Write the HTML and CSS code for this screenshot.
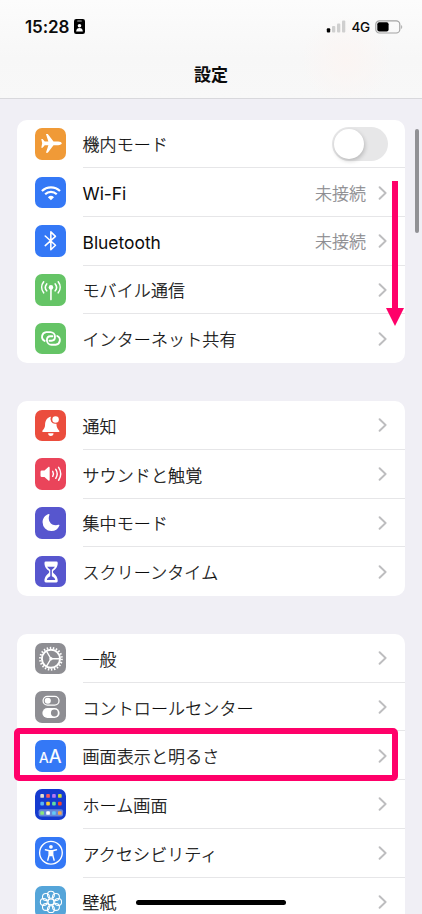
FILE: index.html
```html
<!DOCTYPE html>
<html lang="ja">
<head>
<meta charset="utf-8">
<title>設定</title>
<link rel="stylesheet" href="styles.css">
</head>
<body>
<svg class="defs" width="0" height="0"><defs>
<symbol id="chev" viewBox="0 0 10 14"><path d="M1.6 1.2 7.6 7l-6 5.8" fill="none" stroke="#bdbdbf" stroke-width="1.9" stroke-linecap="round" stroke-linejoin="round"/></symbol>
</defs></svg>
<div class="phone">
<header class="header">
  <div class="status">
    <div class="clock"><span>15:28</span>
      <svg width="11" height="15" viewBox="0 0 11 15"><rect width="11" height="15" rx="2.2"/><rect x="3.2" y="1.4" width="4.6" height="1.1" rx=".5" fill="#bbb"/><circle cx="5.5" cy="6.8" r="1.8" fill="#fff"/><path d="M2.2 12.4c0-2.2 1.4-3.4 3.3-3.4s3.3 1.2 3.3 3.4z" fill="#fff"/></svg>
    </div>
    <div class="signals">
      <svg width="20" height="13" viewBox="0 0 20 13"><rect x=".8" y="8.2" width="3.4" height="4.3" rx="1"/><g fill="#cfcfcf"><rect x="6" y="6" width="3.3" height="6.5" rx="1"/><rect x="11" y="3.4" width="3.3" height="9.1" rx="1"/><rect x="16" y=".6" width="3.3" height="11.9" rx="1"/></g></svg>
      <span class="net">4G</span>
      <svg width="28" height="14" viewBox="0 0 28 14"><rect x=".8" y=".8" width="24" height="12.2" rx="3.6" fill="none" stroke="#a4a4a4" stroke-width="1.2"/><rect x="2.3" y="2.3" width="11.3" height="9.2" rx="2"/><path d="M26.3 5c1.2.5 1.2 3.4 0 3.9z" fill="#999"/></svg>
    </div>
  </div>
  <h1 class="title">設定</h1>
</header>

<main class="groups">
<section class="group">
  <div class="row">
    <svg class="icon orange" viewBox="0 0 32 32"><path fill="#fff" d="M27.2 15.6c0-1-1.6-1.9-3.7-1.9h-4.7L13 6.2h-1.9l2.5 7.5H9.9l-2.2-2.6H6.4l.9 4.5-.9 4.5h1.3l2.2-2.6h3.7l-2.5 7.6H13l5.8-7.6h4.7c2.1 0 3.7-.9 3.7-1.9z"/></svg>
    <div class="cell"><span class="label">機内モード</span><span class="toggle"></span></div>
  </div>
  <div class="row">
    <svg class="icon blue" viewBox="0 0 32 32"><g fill="none" stroke="#fff" stroke-width="2.2"><path d="M7 14.2a13.2 13.2 0 0 1 18.4 0"/><path d="M10.3 17.6a8.4 8.4 0 0 1 11.8 0"/></g><path fill="#fff" d="M16.2 23.7l-3.1-3.2a4.6 4.6 0 0 1 6.2 0z"/></svg>
    <div class="cell"><span class="label latin">Wi-Fi</span><span class="value">未接続</span><svg class="chev"><use href="#chev"/></svg></div>
  </div>
  <div class="row">
    <svg class="icon blue" viewBox="0 0 32 32"><path d="M10.4 11.2l10.4 9.4-4.7 4.5V7l4.7 4.5-10.4 9.4" fill="none" stroke="#fff" stroke-width="1.6" stroke-linejoin="round" stroke-linecap="round"/></svg>
    <div class="cell"><span class="label latin">Bluetooth</span><span class="value">未接続</span><svg class="chev"><use href="#chev"/></svg></div>
  </div>
  <div class="row">
    <svg class="icon green" viewBox="0 0 32 32"><g fill="none" stroke="#fff" stroke-width="1.6" stroke-linecap="round"><path d="M16.2 14v12M11.900 10.100a5.500 5.500 0 0 0 0 7M20.500 10.100a5.500 5.500 0 0 1 0 7M8.800 7.900a9 9 0 0 0 0 11.200M23.600 7.900a9 9 0 0 1 0 11.200"/></g><circle cx="16.200" cy="13.600" r="2.300" fill="#fff"/></svg>
    <div class="cell"><span class="label">モバイル通信</span><svg class="chev"><use href="#chev"/></svg></div>
  </div>
  <div class="row">
    <svg class="icon green" viewBox="0 0 32 32"><g fill="none" stroke="#fff" stroke-width="1.900" stroke-linecap="round"><path d="M9.800 18.200a4.700 4.700 0 0 1 1.600-8.900h4.200a4.700 4.700 0 0 1 4.700 4.700c0 2.300-1.500 4-3.600 4h-2"/><path d="M9.800 18.200a4.700 4.700 0 0 1 1.600-8.900h4.200a4.700 4.700 0 0 1 4.700 4.700c0 2.300-1.500 4-3.600 4h-2" transform="rotate(180 16.200 15.700)"/></g></svg>
    <div class="cell"><span class="label">インターネット共有</span><svg class="chev"><use href="#chev"/></svg></div>
  </div>
</section>

<section class="group">
  <div class="row">
    <svg class="icon red" viewBox="0 0 32 32"><path fill="#fff" d="M7.300 21.700c0-1.100 2.800-2.500 2.900-6.200.1-4.700 2-8 6-8.600a4.800 4.800 0 0 0 4.800 7c1.100 0 .8.200.9 1.600.2 3.700 3 5.100 3 6.200 0 .4-.4.600-.9.600H8.200c-.5 0-.9-.2-.9-.6zM13.400 23.700h5.400a2.700 2.700 0 0 1-5.400 0z"/><circle cx="20.900" cy="9.600" r="3.300" fill="#fff"/></svg>
    <div class="cell"><span class="label">通知</span><svg class="chev"><use href="#chev"/></svg></div>
  </div>
  <div class="row">
    <svg class="icon pink" viewBox="0 0 32 32"><path fill="#fff" d="M5.600 14q0-1.300 1.300-1.300h2.700l4-3.500c.6-.5 1.300-.2 1.300.6v12.500c0 .8-.7 1.100-1.300.6l-4-3.600H6.900q-1.300 0-1.300-1.300z"/><g fill="none" stroke="#fff" stroke-width="1.500" stroke-linecap="round"><path d="M18 13.500a5 5 0 0 1 0 5.100M21.100 11.500a8.500 8.500 0 0 1 0 9.100M24 9.500a12 12 0 0 1 0 13.100"/></g></svg>
    <div class="cell"><span class="label">サウンドと触覚</span><svg class="chev"><use href="#chev"/></svg></div>
  </div>
  <div class="row">
    <svg class="icon indigo" viewBox="0 0 32 32"><path fill="#fff" d="M13.900 7.200c.6-.2 1 .1.700.8-2.400 6 2.200 12 9.200 10.100.8-.2 1.200.2.9.9a8.700 8.700 0 0 1-8.200 5.300 8.800 8.800 0 0 1-8.800-8.800c0-3.900 2.600-7.200 6.200-8.300z"/></svg>
    <div class="cell"><span class="label">集中モード</span><svg class="chev"><use href="#chev"/></svg></div>
  </div>
  <div class="row">
    <svg class="icon indigo" viewBox="0 0 32 32"><path fill="#fff" d="M11 5.600h10.700q1.400 0 1.400 1.400c0 4.500-2.700 6.400-3.900 7.600-1.300 1.200-1.300 2.100 0 3.300 1.200 1.200 3.900 3.200 3.900 7.600q0 1.400-1.400 1.400H11q-1.400 0-1.400-1.400c0-4.400 2.700-6.400 3.900-7.600 1.300-1.200 1.300-2.100 0-3.300-1.200-1.200-3.900-3.100-3.900-7.600q0-1.400 1.400-1.400z"/><path fill="#5756ce" d="M12.300 10.800h8c-.8 1.200-2.300 2.300-3.200 3.200v6.500c1.800 1 3.200 1.800 3.500 3.800h-8.600c.3-2 1.700-2.800 3.500-3.800V14c-.9-.9-2.400-2-3.200-3.200z"/></svg>
    <div class="cell"><span class="label">スクリーンタイム</span><svg class="chev"><use href="#chev"/></svg></div>
  </div>
</section>

<section class="group">
  <div class="row">
    <svg class="icon gray" viewBox="0 0 32 32"><g fill="none" stroke="#fff"><circle cx="16.200" cy="16" r="11" stroke-width="2.200" stroke-dasharray="1.500 1.642"/><circle cx="16.200" cy="16" r="9.200" stroke-width="2"/><path d="M16.200 16h9M16.200 16l-4.700-8M16.200 16l-4.700 8" stroke-width="1.400"/></g><circle cx="16.200" cy="16" r="1.700" fill="#fff"/></svg>
    <div class="cell"><span class="label">一般</span><svg class="chev"><use href="#chev"/></svg></div>
  </div>
  <div class="row">
    <svg class="icon gray" viewBox="0 0 32 32"><rect x="8.200" y="5.400" width="16.200" height="9" rx="4.500" fill="none" stroke="#fff" stroke-width="1.300"/><circle cx="13" cy="9.900" r="3.100" fill="#fff"/><rect x="7.500" y="17.200" width="17.500" height="10.300" rx="5.150" fill="#fff"/><circle cx="19.700" cy="22.300" r="3.500" fill="#8e8e93"/></svg>
    <div class="cell"><span class="label">コントロールセンター</span><svg class="chev"><use href="#chev"/></svg></div>
  </div>
  <div class="row marked">
    <div class="icon blue aa"><span class="small-a">A</span><span class="big-a">A</span></div>
    <div class="cell"><span class="label">画面表示と明るさ</span><svg class="chev"><use href="#chev"/></svg></div>
  </div>
  <div class="row">
    <svg class="icon navy" viewBox="0 0 32 32"><rect x="3.700" y="20.600" width="24.800" height="7.400" rx="2" fill="#6687d8"/><g><rect x="5.400" y="5.200" width="3.700" height="3.700" rx=".9" fill="#e2dccf"/><rect x="11.400" y="5.200" width="3.700" height="3.700" rx=".9" fill="#f9585c"/><rect x="17.400" y="5.200" width="3.700" height="3.700" rx=".9" fill="#b477f3"/><rect x="23.400" y="5.200" width="3.700" height="3.700" rx=".9" fill="#c2dc3f"/><rect x="5.400" y="13" width="3.700" height="3.700" rx=".9" fill="#58b6f7"/><rect x="11.400" y="13" width="3.700" height="3.700" rx=".9" fill="#fdc82f"/><rect x="17.400" y="13" width="3.700" height="3.700" rx=".9" fill="#62dca0"/><rect x="23.400" y="13" width="3.700" height="3.700" rx=".9" fill="#f5432f"/><rect x="5.400" y="22.500" width="3.700" height="3.700" rx=".9" fill="#8be77b"/><rect x="11.400" y="22.500" width="3.700" height="3.700" rx=".9" fill="#fff"/><rect x="17.400" y="22.500" width="3.700" height="3.700" rx=".9" fill="#62c8f6"/><rect x="23.400" y="22.500" width="3.700" height="3.700" rx=".9" fill="#f5a34f"/></g></svg>
    <div class="cell"><span class="label">ホーム画面</span><svg class="chev"><use href="#chev"/></svg></div>
  </div>
  <div class="row">
    <svg class="icon blue" viewBox="0 0 32 32"><circle cx="16.200" cy="16" r="11.500" fill="none" stroke="#fff" stroke-width="1.400"/><circle cx="16.200" cy="10" r="1.900" fill="#fff"/><path d="M10.600 13l3.900.9v4l-1.500 5.600M21.800 13l-3.900.9v4l1.500 5.600" fill="none" stroke="#fff" stroke-width="1.500" stroke-linecap="round" stroke-linejoin="round"/><path fill="#fff" d="M14 13.300h4.400v5.300l-1 .9h-2.400l-1-.9z"/></svg>
    <div class="cell"><span class="label">アクセシビリティ</span><svg class="chev"><use href="#chev"/></svg></div>
  </div>
  <div class="row">
    <svg class="icon sky" viewBox="0 0 32 32"><g fill="none" stroke="#fff" stroke-width="1.100"><circle cx="16.200" cy="8.900" r="3.500"/><circle cx="21.300" cy="11.100" r="3.500"/><circle cx="23.500" cy="16.200" r="3.500"/><circle cx="21.300" cy="21.300" r="3.500"/><circle cx="16.200" cy="23.500" r="3.500"/><circle cx="11.100" cy="21.300" r="3.500"/><circle cx="8.900" cy="16.200" r="3.500"/><circle cx="11.100" cy="11.100" r="3.500"/><circle cx="16.200" cy="16.200" r="3"/></g></svg>
    <div class="cell"><span class="label">壁紙</span><svg class="chev"><use href="#chev"/></svg></div>
  </div>
</section>
</main>
<div class="scrollbar"></div>
<svg class="arrow" viewBox="0 0 18 145"><path fill="#ff0069" d="M6 0h6v127h6L9 145 0 127h6z"/></svg>
<div class="home-bar"></div>
</div>
</body>
</html>
```
FILE: styles.css
```css
*, *::before, *::after { box-sizing: border-box; }
html, body { margin: 0; height: 100%; overflow: hidden; }
body { background: #f0eff5; color: #0c0c0c; font-family: Inter, "Noto Sans CJK JP", sans-serif; }
.defs { position: absolute; }
.phone { position: relative; width: 422px; height: 914px; overflow: hidden; }

.header {
  height: 99px;
  border-bottom: 1px solid #d8d8dc;
  background: radial-gradient(circle at 346px 60px, #fbf5f3 0, rgba(251, 245, 243, 0) 45px), linear-gradient(#fcfcfc, #f7f7f7 60%, #f8f8f8);
}
.status { display: flex; justify-content: space-between; align-items: center; height: 53px; padding: 0 19px 0 25px; }
.clock { display: flex; align-items: center; gap: 5px; font-size: 17px; font-weight: 600; letter-spacing: -0.1px; }
.signals { display: flex; align-items: center; }
.net { margin: 0 5px 0 5px; font-size: 13.5px; font-weight: 500; letter-spacing: -0.2px; }
.title { margin: 9px 0 0; text-align: center; font: 600 17px/24px "Noto Sans CJK JP", sans-serif; }

.groups { display: flex; flex-direction: column; gap: 38.2px; padding: 20.5px 17px 0; }
.group { width: 388px; padding-left: 17.5px; border-radius: 10px; background: #fff; }
.row { position: relative; display: flex; align-items: center; gap: 16.5px; height: 48.7px; }
.icon { flex: none; width: 31.5px; height: 31.5px; border-radius: 7px; }
.cell { flex: 1; display: flex; align-items: center; height: 100%; padding-right: 17.5px; border-bottom: 1px solid #e6e6e8; }
.row:last-child .cell { border-bottom-color: transparent; }
.label { flex: 1; padding-top: 1px; font: 300 17px/25px "Noto Sans CJK JP", sans-serif; letter-spacing: 0.12px; -webkit-text-stroke: 0.25px currentColor; }
.latin { padding-top: 3px; font: 400 17.4px/25px Inter, sans-serif; letter-spacing: 0; -webkit-text-stroke: 0; }
.value { margin-right: 11.5px; color: #8a8a8e; font: 300 17px/25px "Noto Sans CJK JP", sans-serif; -webkit-text-stroke: 0.25px currentColor; }
.chev { width: 10px; height: 14px; margin-top: 1px; }

.orange { background: #f09a37; }
.blue { background: #3478f6; }
.green { background: #65c466; }
.red { background: #eb4d3d; }
.pink { background: #ea445a; }
.indigo { background: #5756ce; }
.gray { background: #8e8e93; }
.navy { background: #153bd0; }
.sky { background: #55a5d9; }

.aa { display: flex; justify-content: center; align-items: baseline; color: #fff; font-weight: 400; line-height: 32px; -webkit-text-stroke: 0.2px #fff; }
.small-a { font-size: 14px; }
.big-a { font-size: 18.5px; }

.toggle { width: 56px; height: 34px; padding: 2px; border-radius: 17px; background: #e7e7e8; }
.toggle::before { content: ""; display: block; width: 30px; height: 30px; border-radius: 50%; background: #fff; box-shadow: 1px 2px 4px rgba(0, 0, 0, .2); }
.row:first-child .toggle { margin-top: 1px; }

.marked::after { content: ""; position: absolute; z-index: 1; left: -20.5px; top: -3.4px; width: 384px; height: 53px; border: 6px solid #ff0069; border-radius: 5px; }
.scrollbar { position: absolute; left: 415px; top: 129px; width: 4px; height: 104px; border-radius: 2px; background: #919195; }
.arrow { position: absolute; left: 386px; top: 181px; width: 18px; height: 145px; }
.home-bar { position: absolute; left: 136px; top: 900px; width: 150px; height: 5px; border-radius: 3px; background: #000; }
```
